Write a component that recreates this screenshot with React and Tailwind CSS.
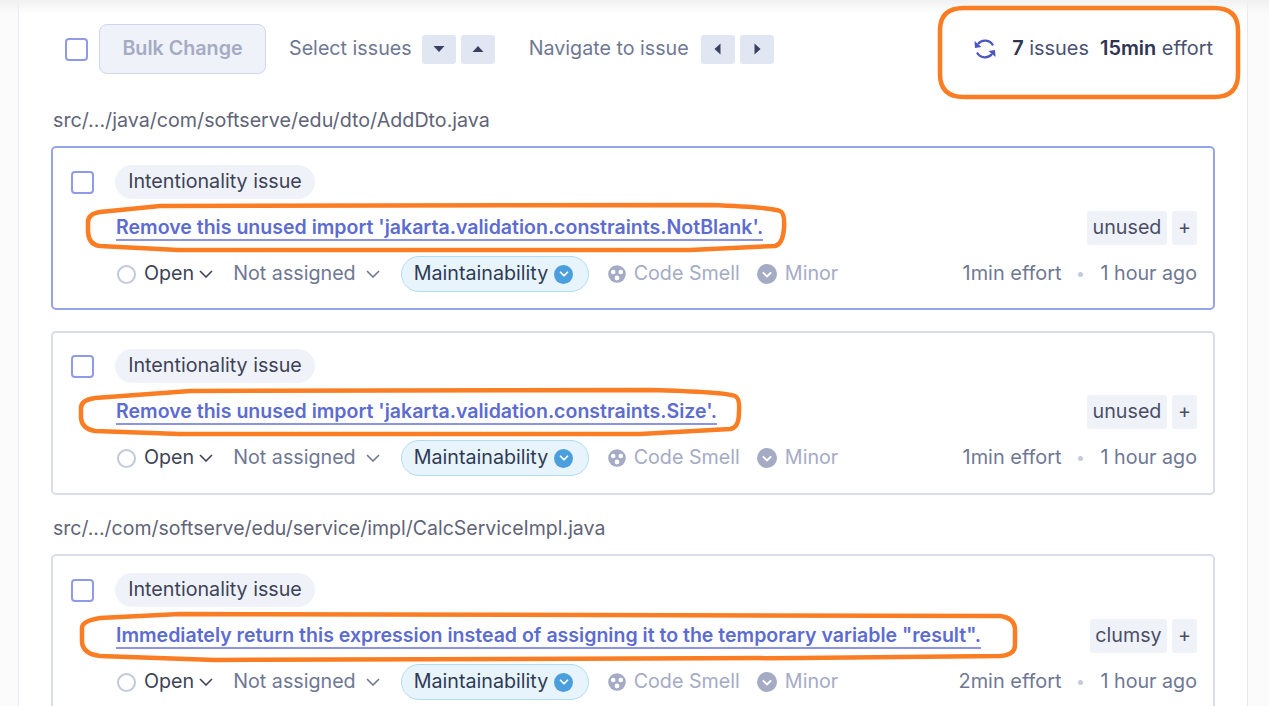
import { ChevronDown } from 'lucide-react'

const orange = '#fb7d23'

function Tri({ dir }) {
  const points = {
    down: '0.5,3 11.5,3 6,9',
    up: '0.5,9 11.5,9 6,3',
    left: '8.5,0.5 8.5,11.5 2.5,6',
    right: '3.5,0.5 3.5,11.5 9.5,6',
  }
  return (
    <svg width="12" height="12" viewBox="0 0 12 12">
      <polygon points={points[dir]} fill="#3a4160" />
    </svg>
  )
}

function KeyBtn({ dir }) {
  return (
    <span className="flex h-[29px] w-[34px] items-center justify-center rounded-[3px] bg-[#e1e6f3]">
      <Tri dir={dir} />
    </span>
  )
}

function Checkbox({ className }) {
  return <span className={`block h-[23px] w-[23px] shrink-0 rounded-[4px] border-2 border-[#8f9be8] bg-white ${className}`} />
}

function Caret({ className }) {
  return (
    <svg width="14" height="8" viewBox="0 0 14 8" fill="none" stroke="currentColor" strokeWidth="1.6" className={`shrink-0 ${className}`}>
      <path d="M1 1 L7 7 L13 1" />
    </svg>
  )
}

function SmellIcon() {
  return (
    <svg width="18" height="18" viewBox="0 0 18 18" className="shrink-0">
      <circle cx="9" cy="9" r="8.8" fill="#a5abc4" />
      <circle cx="5.2" cy="7" r="2.3" fill="#fff" />
      <circle cx="12.8" cy="7" r="2.3" fill="#fff" />
      <circle cx="9" cy="13" r="2.4" fill="#fff" />
    </svg>
  )
}

function MinorIcon() {
  return (
    <svg width="20" height="20" viewBox="0 0 20 20" className="shrink-0">
      <circle cx="10" cy="10" r="10" fill="#a5abc4" />
      <path d="M5.8 8.4 L10 12.4 L14.2 8.4" fill="none" stroke="#fff" strokeWidth="2" />
    </svg>
  )
}

function IssueCard({ title, tag, effort, selected, tagWidth, cut, tight }) {
  return (
    <div className={`rounded-[5px] border-2 bg-white pl-[18px] pr-[16px] ${tight ? 'pt-[16px]' : 'pt-[17px]'} ${selected ? 'border-[#98a4ea]' : 'border-[#d9ddea]'} ${cut ? 'h-[170px]' : 'h-[164px]'}`}>
      <div className="flex h-[34px] items-center">
        <Checkbox />
        <span className="ml-[21px] flex h-[34px] w-[200px] items-center justify-center rounded-full bg-[#eff2f9] text-[#3e4357]">Intentionality issue</span>
      </div>
      <div className="mt-[12px] flex h-[34px] items-center justify-between pl-[45px]">
        <a className="border-b-2 border-[#8d94e2] text-[19.55px] font-semibold leading-[24px] text-[#5d6cd0]">{title}</a>
        <div className="flex items-center gap-[5px]">
          <span className={`flex h-[34px] items-center justify-center rounded-[3px] bg-[#eff2f9] text-[#4a4f66] ${tagWidth}`}>{tag}</span>
          <span className="flex h-[34px] w-[25px] items-center justify-center rounded-[3px] bg-[#eff2f9] text-[#4a4f66]">+</span>
        </div>
      </div>
      <div className="mt-[11px] flex h-[36px] items-center pl-[46px]">
        <span className="h-[19px] w-[19px] rounded-full border-2 border-[#c3c9dc]" />
        <span className="ml-[8px] text-[#3e4357]">Open</span>
        <Caret className="ml-[5px] text-[#3e4357]" />
        <span className="ml-[20px] text-[#6f7893]">Not assigned</span>
        <Caret className="ml-[10px] text-[#6f7893]" />
        <span className="ml-[21px] flex h-[36px] w-[188px] items-center gap-[6px] rounded-full border border-[#b2dcf3] bg-[#e8f4fb] pl-[12px] text-[#2f3b55]">
          Maintainability
          <span className="flex h-[19px] w-[19px] items-center justify-center rounded-full bg-[#4b9fdc]">
            <ChevronDown size={14} strokeWidth={3} className="text-white" />
          </span>
        </span>
        <span className="ml-[19px] flex items-center gap-[8px] text-[#a5abc4]"><SmellIcon />Code Smell</span>
        <span className="ml-[17px] flex items-center gap-[8px] text-[#a5abc4]"><MinorIcon />Minor</span>
        <span className="ml-auto text-[19.9px] text-[#6f7893]">{effort}</span>
        <span className="mx-[17px] h-[5px] w-[5px] rounded-full bg-[#c3c9dc]" />
        <span className="text-[#6f7893]">1 hour ago</span>
      </div>
    </div>
  )
}

// hand-drawn orange marks that sit on top of the page
function Annotations() {
  return (
    <svg className="pointer-events-none absolute left-0 top-0" width="1269" height="706" fill="none" stroke={orange} strokeWidth="4.5">
      <path d="M964 8 H1214 Q1238 8 1238 30 V74 Q1238 97 1214 97 H964 Q940 97 940 74 V30 Q940 8 964 8 Z" />
      <path d="M160 206 L710 205 Q770 207 780 211 Q785 213 784 228 Q783 244 775 246 L690 250 L178 250 L100 246 Q89 245 88 232 L88 222 Q88 214 100 212 Z" />
      <path d="M190 391 L650 390 Q725 392 735 396 Q740 398 739 412 Q739 428 730 429 L640 434 L180 434 L95 431 Q82 429 81 418 L81 408 Q81 400 95 398 Z" />
      <path d="M180 614 L1000 616 Q1015 618 1015 630 L1015 645 Q1015 655 1000 656 L800 658 L215 660 L100 656 Q83 654 82 642 L82 628 Q82 621 100 618 Z" />
    </svg>
  )
}

export default function App() {
  return (
    <div className="relative h-[706px] overflow-hidden bg-white font-['Inter',sans-serif] text-[19.7px]">
      <div className="h-[706px] bg-[#fbfbfc] pl-[18px] pr-[21px]">
        <div className="h-full border-x border-[#e6e9f2] bg-white pl-[32px] pr-[32px] pt-[24px]">
          <div className="flex h-[50px] items-center">
            <Checkbox className="ml-[14px]" />
            <span className="ml-[11px] flex h-[50px] w-[167px] items-center justify-center rounded-[8px] border border-[#d0d6ea] bg-[#eff2f9] font-semibold text-[#a5abc4]">Bulk Change</span>
            <span className="ml-[23px] text-[#6f7893]">Select issues</span>
            <span className="ml-[10px] flex gap-[5px]"><KeyBtn dir="down" /><KeyBtn dir="up" /></span>
            <span className="ml-[34px] text-[#6f7893]">Navigate to issue</span>
            <span className="ml-[12px] flex gap-[5px]"><KeyBtn dir="left" /><KeyBtn dir="right" /></span>
            <span className="ml-auto mr-[2px] flex items-center text-[19.9px] text-[#4a5170]">
              <svg width="24" height="24" viewBox="0 0 24 24" fill="none" stroke="#4a55c0" strokeWidth="2.2" className="mr-[15px]">
                <path d="M20 8.5 A9 9 0 0 0 5 7" />
                <polygon points="1.5,4 2,11 8.5,10" fill="#4a55c0" stroke="none" />
                <path d="M4 15.5 A9 9 0 0 0 19 17" />
                <polygon points="22.5,20 22,13 15.5,14" fill="#4a55c0" stroke="none" />
              </svg>
              <b className="font-semibold text-[#2f3450]">7</b>&nbsp;issues
              <b className="ml-[11px] font-semibold text-[#2f3450]">15min</b>&nbsp;effort
            </span>
          </div>
          <div className="ml-[2px] mt-[33px] h-[26px] leading-[26px] text-[#5f6478]">src/.../java/com/softserve/edu/dto/AddDto.java</div>
          <div className="mt-[13px]">
            <IssueCard selected title="Remove this unused import 'jakarta.validation.constraints.NotBlank'." tag="unused" tagWidth="w-[80px]" effort="1min effort" />
          </div>
          <div className="mt-[21px]">
            <IssueCard tight title="Remove this unused import 'jakarta.validation.constraints.Size'." tag="unused" tagWidth="w-[80px]" effort="1min effort" />
          </div>
          <div className="ml-[2px] mt-[20px] h-[26px] text-[19.5px] leading-[26px] text-[#5f6478]">src/.../com/softserve/edu/service/impl/CalcServiceImpl.java</div>
          <div className="mt-[13px]">
            <IssueCard cut title={'Immediately return this expression instead of assigning it to the temporary variable "result".'} tag="clumsy" tagWidth="w-[77px]" effort="2min effort" />
          </div>
        </div>
      </div>
      <div className="pointer-events-none absolute inset-x-0 top-0 h-[14px] bg-gradient-to-b from-[#f1f1f2] to-transparent" />
      <Annotations />
    </div>
  )
}
